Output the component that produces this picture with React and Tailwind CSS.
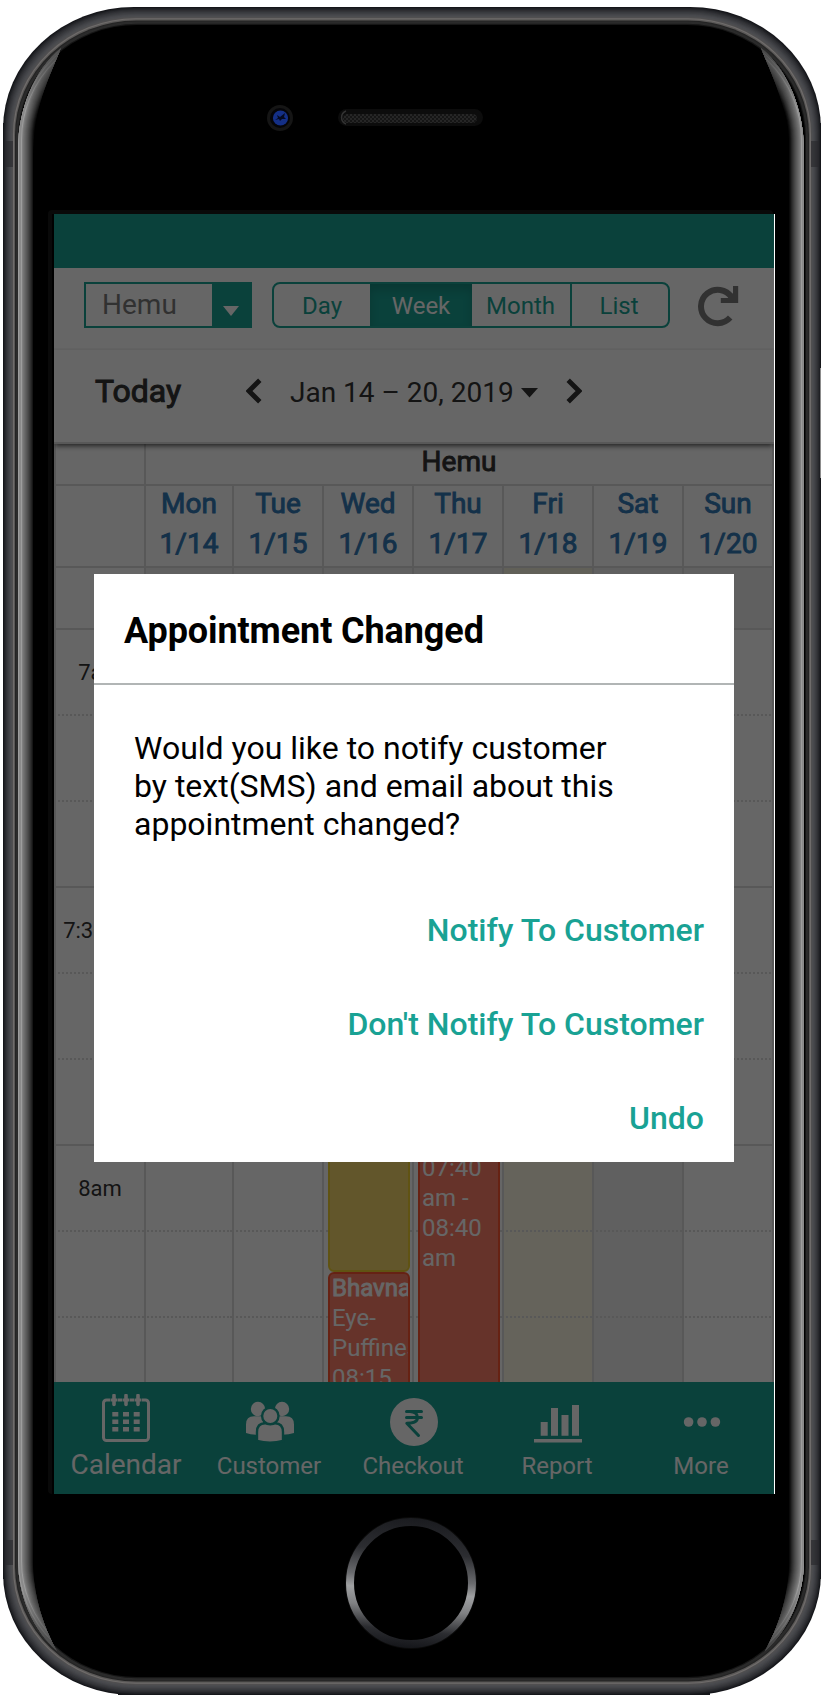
import React from "react";

const BEZEL = ["#15161a", "#1f2024", "#28292d", "#303135", "#37383c", "#3d3e42", "#434448", "#48494d", "#4c4d50", "#504f50", "#6f6c6b", "#5a5857", "#242424", "#2b2b2b", "#2b2b2b", "#161616", "#000000"];
const SHINE = [
  [28, "#0a0a0a"], [26, "#161616"], [24, "#242424"], [22, "#303030"], [20, "#3b3b3b"], [18, "#464646"], [16, "#505050"],
  [14, "#595959"], [12, "#626262"], [10, "#6b6b6b"], [8, "#747474"], [6, "#808080"], [4, "#9d9d9d"], [2, "#8a8a8a"],
];
const SHINE_LEFT = "M18 150C18 110 34 70 61 48C48 80 34 106 33 158V1560C33 1598 45 1630 57 1651C33 1630 18 1596 18 1560Z";

function PhoneFrame() {
  return (
    <svg className="absolute inset-0" width="826" height="1708" viewBox="0 0 826 1708">
      <defs>
        <clipPath id="shine">
          <path d={SHINE_LEFT} />
          <path d={SHINE_LEFT} transform="matrix(-1 0 0 1 822 0)" />
        </clipPath>
        <linearGradient id="fade" gradientUnits="userSpaceOnUse" x1="0" y1="45" x2="0" y2="1655">
          <stop offset="0" stopColor="#777" />
          <stop offset="0.04" stopColor="#fff" />
          <stop offset="0.96" stopColor="#fff" />
          <stop offset="1" stopColor="#777" />
        </linearGradient>
        <mask id="shineFade" maskUnits="userSpaceOnUse" x="0" y="0" width="826" height="1708">
          <rect width="826" height="1708" fill="url(#fade)" />
        </mask>
        <linearGradient id="ring" gradientUnits="userSpaceOnUse" x1="416" y1="1519" x2="404" y2="1650">
          <stop offset="0" stopColor="#1b1c20" />
          <stop offset="0.25" stopColor="#2c2d31" />
          <stop offset="0.45" stopColor="#6a6b6e" />
          <stop offset="0.55" stopColor="#a0a1a3" />
          <stop offset="0.68" stopColor="#808183" />
          <stop offset="0.85" stopColor="#2b2c30" />
          <stop offset="1" stopColor="#121317" />
        </linearGradient>
        <pattern id="grille" width="4" height="4" patternUnits="userSpaceOnUse">
          <rect width="4" height="4" fill="#151515" />
          <circle cx="1" cy="1" r="0.8" fill="#3a3a3a" />
          <circle cx="3" cy="3" r="0.8" fill="#3a3a3a" />
        </pattern>
      </defs>
      <path d="M133 7H690V12H133ZM3 123H8V1579H3ZM816 123H821V1579H816ZM118 1690H710V1695H118Z" fill="#15161a" />
      {BEZEL.map((color, i) => (
        <rect key={i} x={3 + i} y={7 + i * 1.12} width={818 - 2 * i} height={1688 - 2.24 * i} rx={131 - i * 0.8} ry={122 - i * 0.6} fill={color} />
      ))}
      <path d="M5 141H13V167H5ZM811 141H819V167H811ZM5 1540H13V1565H5ZM811 1540H819V1565H811Z" fill="#26272a" fillOpacity="0.6" />
      <path d="M820 368H821V478H820Z" fill="#8c8c8c" />
      <g mask="url(#shineFade)">
        <g clipPath="url(#shine)" fill="none">
          {SHINE.map(([w, color]) => (
            <rect key={w} x="20" y="26" width="783" height="1649" rx="118" ry="114" stroke={color} strokeWidth={w} />
          ))}
        </g>
      </g>
      <circle cx="280" cy="118" r="13" fill="#151515" />
      <circle cx="280" cy="118" r="10" fill="#050508" />
      <circle cx="280.5" cy="118" r="7.6" fill="#142f86" />
      <path d="M277 115L280 117L285 113L284 117L286 119L282 119L280 121L279 119L275 120L278 118Z" fill="#050a20" />
      <rect x="338" y="109" width="145" height="17" rx="8.5" fill="#0c0c0c" />
      <path d="M346 111A7 7 0 0 0 346 124" stroke="#333" strokeWidth="1.5" fill="none" />
      <rect x="343" y="114" width="134" height="9" rx="4.5" fill="url(#grille)" />
      <rect x="48" y="210" width="725" height="1284" rx="4" fill="#090909" />
      <rect x="52" y="214" width="10" height="1280" fill="#000" />
      <circle cx="411" cy="1583" r="66" fill="#0a0a0a" />
      <circle cx="411" cy="1583" r="61" fill="#000" stroke="url(#ring)" strokeWidth="8" />
    </svg>
  );
}

function RefreshIcon() {
  return (
    <svg width="42" height="42" viewBox="0 0 42 42">
      <path d="M32.2 32.6A16.7 16.7 0 1 1 33.6 12.2" stroke="#7c7c7c" strokeWidth="6" fill="none" />
      <path d="M35 1H40.2V18H22.8V13H30L35 8Z" fill="#7c7c7c" />
    </svg>
  );
}

function Chevron({ flip }) {
  return (
    <svg width="16" height="26" viewBox="0 0 16 26">
      <path d={flip ? "M2.2 2.2L13 13L2.2 23.8" : "M13.8 2.2L3 13L13.8 23.8"} stroke="#333" strokeWidth="4.8" fill="none" />
    </svg>
  );
}

function Toolbar() {
  return (
    <div className="flex h-[82px] items-start border-b-2 border-[#f6f6f6] pl-[30px] pt-[14px]">
      <div className="flex h-[46px] w-[168px] border-2 border-[#19a294]">
        <div className="flex-1 pl-4 text-[28px] leading-[41px] text-[#7c7c7c]">Hemu</div>
        <div className="flex w-[38px] justify-center bg-[#19a294] pt-[22px]">
          <svg width="16" height="10" viewBox="0 0 16 10"><path d="M0 0H16L8 10Z" fill="#fff" /></svg>
        </div>
      </div>
      <div className="ml-5 flex h-[46px] w-[398px] overflow-hidden rounded-lg border-2 border-[#19a294] text-center text-2xl leading-[44px] text-[#19a294]">
        <div className="w-[96px]">Day</div>
        <div className="w-[102px] bg-[#19a294] text-white shadow-[inset_0_6px_10px_rgba(0,0,0,0.15)]">Week</div>
        <div className="w-[100px] border-r-2 border-[#19a294] pr-[1px]">Month</div>
        <div className="w-[96px] pr-[2px]">List</div>
      </div>
      <div className="ml-[28px] mt-[3px]"><RefreshIcon /></div>
    </div>
  );
}

function DateBar() {
  return (
    <div className="relative z-10 flex h-[94px] items-center border-b-2 border-[#ddd] bg-white pb-[10px] shadow-[0_3px_5px_-1px_rgba(0,0,0,0.65)]">
      <div className="w-[150px] pl-[41px] text-[32px] leading-9 text-[#333] [-webkit-text-stroke:1px_#333]">Today</div>
      <div className="ml-[42px] flex"><Chevron /></div>
      <div className="ml-[28px] w-[223px] whitespace-nowrap pt-1 text-[28px] leading-9 text-[#333]">Jan 14 – 20, 2019</div>
      <svg className="ml-[8px] mt-[3px]" width="17" height="10" viewBox="0 0 17 10"><path d="M0 0H17L8.5 9.5Z" fill="#333" /></svg>
      <div className="ml-[28px] flex"><Chevron flip /></div>
    </div>
  );
}

const COLS = "grid grid-cols-[90px_88px_90px_90px_90px_90px_90px_92px]";
const DAYS = [["Mon", "1/14"], ["Tue", "1/15"], ["Wed", "1/16"], ["Thu", "1/17"], ["Fri", "1/18"], ["Sat", "1/19"], ["Sun", "1/20"]];
const ROWS = [
  { time: "7am", solid: true }, {}, {}, { time: "7:30am", solid: true }, {}, {}, { time: "8am", solid: true }, {}, {},
];

function cellBg(i, closed) {
  if (i === 4) return closed ? "bg-[#f3efdb]" : "bg-[#fcf8e3]";
  if (i === 5 || closed) return "bg-[#f1f1f1]";
  return "bg-white";
}

function Calendar() {
  return (
    <div className="relative h-[938px] overflow-hidden text-[#333]">
      <div className="flex h-10">
        <div className="w-[90px] border-l-2 border-[#ddd]" />
        <div className="flex-1 border-x-2 border-[#ddd] text-center text-[28px] leading-[36px] [-webkit-text-stroke:0.9px_#333]">Hemu</div>
      </div>
      <div className={COLS + " h-[82px] border-t-2 border-[#ddd]"}>
        <div className="border-l-2 border-[#ddd]" />
        {DAYS.map(([name, date], i) => (
          <div key={name} className={"border-l-2 border-[#ddd] text-center text-[28px] leading-10 text-[#337ab7] [-webkit-text-stroke:0.9px_#337ab7] " + (i === 6 ? "border-r-2" : "")}>
            <div className="-mt-[2px]">{name}</div>
            <div>{date}</div>
          </div>
        ))}
      </div>
      <div className={COLS + " h-[62px]"}>
        <div className="border-l-2 border-t-2 border-[#ddd]" />
        {DAYS.map(([name], i) => (
          <div key={name} className={"border-l-2 border-t-2 border-[#ddd] " + cellBg(i, true) + (i === 6 ? " border-r-2" : "")} />
        ))}
      </div>
      {ROWS.map((row, r) => (
        <div key={r} className={COLS + " h-[86px]"}>
          <div className={"border-l-2 border-t-2 border-[#ddd] text-center text-[22px] leading-[86px] " + (row.solid ? "" : "[border-top-style:dotted]")}>{row.time}</div>
          {DAYS.map(([name], i) => (
            <div key={name} className={"border-l-2 border-t-2 border-[#ddd] " + cellBg(i, false) + (row.solid ? "" : " [border-top-style:dotted]") + (i === 6 ? " border-r-2" : "")} />
          ))}
        </div>
      ))}
      <div className="absolute left-[274px] top-[600px] h-[228px] w-[82px] rounded-md border-2 border-[#f0d030] bg-[#f5d76b]" />
      <div className="absolute left-[274px] top-[828px] h-[180px] w-[82px] overflow-hidden rounded-md border-2 border-[#ff5530] bg-[#ff8069] pl-[2px] text-2xl leading-[30px] text-white">
        <div className="-mt-[1px] [-webkit-text-stroke:0.9px_#fff]">Bhavna</div>
        <div>Eye-</div>
        <div>Puffiness</div>
        <div>08:15</div>
      </div>
      <div className="absolute left-[364px] top-[600px] h-[400px] w-[82px] border-2 border-[#ff5530] bg-[#ff8069] pl-[2px] pt-[107px] text-2xl leading-[30px] text-white">
        <div>07:40</div>
        <div>am -</div>
        <div>08:40</div>
        <div>am</div>
      </div>
    </div>
  );
}

function CalendarIcon() {
  return (
    <svg width="48" height="48" viewBox="0 0 48 48">
      <rect x="1.5" y="6" width="45" height="40.5" rx="3" fill="none" stroke="#fff" strokeWidth="3" />
      <path d="M8.5 4H15.5V9H8.5ZM20.5 4H27.5V9H20.5ZM32.5 4H39.5V9H32.5Z" fill="#19a294" />
      <path d="M9 6H15M21 6H27M33 6H39" stroke="#fff" strokeWidth="3" />
      <path d="M12 1.5V10.5M24 1.5V10.5M36 1.5V10.5" stroke="#fff" strokeWidth="3.6" strokeLinecap="round" />
      <path d="M10.3 18H16.3V22.5H10.3ZM21 18H27V22.5H21ZM31.7 18H37.7V22.5H31.7ZM10.3 25.5H16.3V30H10.3ZM21 25.5H27V30H21ZM31.7 25.5H37.7V30H31.7ZM10.3 33H16.3V37.5H10.3ZM21 33H27V37.5H21ZM31.7 33H37.7V37.5H31.7Z" fill="#fff" />
    </svg>
  );
}

function CustomerIcon() {
  return (
    <svg width="48" height="48" viewBox="0 0 48 48">
      <g fill="#fff">
        <circle cx="12" cy="11" r="7.2" />
        <circle cx="36" cy="11" r="7.2" />
        <path d="M0 35V26.5Q0 18.3 8 18.3H17V36.5Q7 37.5 0 35ZM48 35V26.5Q48 18.3 40 18.3H31V36.5Q41 37.5 48 35Z" />
      </g>
      <g fill="#fff" stroke="#19a294" strokeWidth="2.4">
        <path d="M11 43V34Q11 25.2 19 25.2H29Q37 25.2 37 34V43Q24 46.5 11 43Z" />
        <circle cx="24.3" cy="18" r="8.2" />
      </g>
    </svg>
  );
}

function RupeeIcon() {
  return (
    <svg width="48" height="48" viewBox="0 0 48 48">
      <circle cx="24" cy="24" r="24" fill="#fff" />
      <path d="M16.5 13.5H31.5M16.5 19.5H31.5M16.5 13.5H20Q27.5 14 27.5 19.5Q27.5 25.3 16.8 25.3L28.5 37.5" stroke="#19a294" strokeWidth="3" strokeLinecap="round" strokeLinejoin="round" fill="none" />
    </svg>
  );
}

function ReportIcon() {
  return (
    <svg width="48" height="48" viewBox="0 0 48 48">
      <path d="M0 41H48V44.6H0ZM6.7 24H13.7V37.7H6.7ZM17 10H24V37.7H17ZM27.5 17H34.5V37.7H27.5ZM38 7H45V37.7H38Z" fill="#fff" />
    </svg>
  );
}

function MoreIcon() {
  return (
    <svg width="48" height="48" viewBox="0 0 48 48" fill="#fff">
      <circle cx="10.6" cy="24" r="4.8" />
      <circle cx="24" cy="24" r="4.8" />
      <circle cx="37.4" cy="24" r="4.8" />
    </svg>
  );
}

const TABS = [
  ["Calendar", CalendarIcon], ["Customer", CustomerIcon], ["Checkout", RupeeIcon], ["Report", ReportIcon], ["More", MoreIcon],
];

function TabBar() {
  return (
    <div className="grid h-[112px] grid-cols-5 bg-[#19a294] text-white">
      {TABS.map(([label, Icon], i) => (
        <div key={label} className={"flex flex-col items-center " + (i === 0 ? "pt-3" : "pt-4")}>
          <Icon />
          <div className={i === 0 ? "mt-[5px] text-[28px] leading-9" : "mt-[4px] pr-[2px] text-2xl leading-8"}>{label}</div>
        </div>
      ))}
    </div>
  );
}

function Dialog() {
  return (
    <div className="absolute left-[40px] top-[360px] z-30 h-[588px] w-[640px] bg-white">
      <div className="h-[111px] border-b-2 border-[#b1b5b5] pl-[30px] pt-[36px] text-[36px] font-bold leading-[42px] tracking-[-0.1px] text-black">
        Appointment Changed
      </div>
      <div className="w-[560px] pl-[40px] pt-[44px] text-[32px] leading-[38px] text-black">
        Would you like to notify customer<br />by text(SMS) and email about this<br />appointment changed?
      </div>
      <div className="mt-[68px] flex flex-col items-end gap-[56px] pr-[30px] text-[32px] font-medium leading-[38px] text-[#19a294]">
        <button>Notify To Customer</button>
        <button>Don't Notify To Customer</button>
        <button>Undo</button>
      </div>
    </div>
  );
}

export default function App() {
  return (
    <div className="relative h-[1708px] w-[826px] overflow-hidden bg-white pl-[54px] pt-[214px] font-['Roboto','Liberation_Sans',sans-serif]">
      <PhoneFrame />
      <div className="relative h-[1280px] w-[721px] bg-white">
        <div className="relative flex w-[720px] flex-col overflow-hidden bg-white">
          <div className="h-[54px] bg-[#19a294]" />
          <Toolbar />
          <DateBar />
          <Calendar />
          <TabBar />
          <div className="absolute inset-0 z-20 bg-black/60" />
        </div>
        <Dialog />
      </div>
    </div>
  );
}
